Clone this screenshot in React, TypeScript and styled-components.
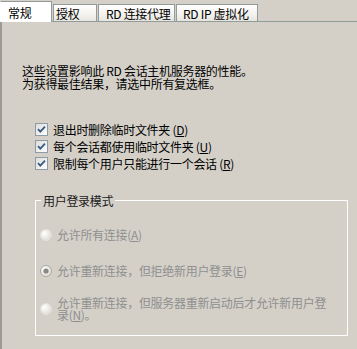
import React from 'react';
import styled, {createGlobalStyle, css} from 'styled-components';

const GlobalStyle = createGlobalStyle`
	html, body {
		margin: 0;
		padding: 0;
		background: #d4d0c8;
	}

	body {
		font-family: 'Noto Sans CJK SC', 'DejaVu Sans', sans-serif;
		font-size: 12px;
		line-height: 13px;
		letter-spacing: -0.3px;
		color: #000;
	}
`;

const Window = styled.div`
	width: 357px;
	height: 349px;
	overflow: hidden;
	display: flex;
	flex-direction: column;
`;

const TabStrip = styled.div`
	display: flex;
	align-items: flex-end;
	height: 21px;
	border-bottom: 1px solid #919b9c;
	flex-shrink: 0;
`;

const Tab = styled.div<{
	readonly $active?: boolean;
	readonly $width: number;
	readonly $indent: number;
}>(props => css`
	box-sizing: border-box;
	width: ${props.$width}px;
	padding-left: ${props.$indent}px;
	white-space: nowrap;
	border: 1px solid #919b9c;
	border-bottom: none;
	display: flex;
	align-items: center;

	${props.$active ? css`
		height: 21px;
		margin-bottom: -1px;
		background: #fff;
		border-left-color: #fff;
		position: relative;
		z-index: 1;
	` : css`
		height: 17px;
		margin-left: 1px;
		background: linear-gradient(#ffffff, #f3f2ee 60%, #e6e4dd);
		padding-top: 1px;
	`}
`);

const Panel = styled.div`
	flex: 1;
	border-left: 2px solid #9c9a94;
	display: flex;
	flex-direction: column;
`;

const Intro = styled.p`
	margin: 42px 0 0 20px;
	line-height: 13px;
`;

const CheckList = styled.div`
	margin: 31px 0 0 33px;
	display: flex;
	flex-direction: column;
`;

const CheckRow = styled.label`
	display: flex;
	align-items: center;
	gap: 5px;
	height: 17px;
`;

const Group = styled.fieldset`
	box-sizing: border-box;
	width: 313px;
	margin: 22px 0 0 33px;
	padding: 22px 4px 14px 4px;
	border: 1px solid #fff;
	display: flex;
	flex-direction: column;
	min-width: 0;
`;

const GroupTitle = styled.legend`
	padding: 0 2px;
	margin-left: 1px;
	line-height: 13px;
	color: #1a1a1a;
`;

const RadioRow = styled.div<{readonly $gap: number}>(props => css`
	display: flex;
	align-items: center;
	gap: 5px;
	margin-top: ${props.$gap}px;
	color: #8f8f8f;
`);

const RadioText = styled.span`
	width: 274px;
	line-height: 12px;
	word-break: break-all;
`;

const Key = styled.u`
	text-underline-offset: 1px;
`;

const CheckBox = () => (
	<svg width='13' height='13' viewBox='0 0 13 13' style={{flexShrink: 0}}>
		<defs>
			<linearGradient id='cbFill' x1='0' y1='0' x2='1' y2='1'>
				<stop offset='0' stopColor='#dcdcd8'/>
				<stop offset='1' stopColor='#ffffff'/>
			</linearGradient>
		</defs>
		<rect x='0.5' y='0.5' width='12' height='12' fill='url(#cbFill)' stroke='#8d9aa8'/>
		<path d='M3 6.2 L5.3 8.6 L10 3.6' fill='none' stroke='#3a5a86' strokeWidth='1.8'/>
	</svg>
);

const Radio: React.FC<{readonly checked?: boolean}> = ({checked}) => (
	<svg width='12' height='12' viewBox='0 0 12 12' style={{flexShrink: 0}}>
		<defs>
			<radialGradient id='rdFill' cx='0.35' cy='0.35' r='0.7'>
				<stop offset='0' stopColor='#ffffff'/>
				<stop offset='1' stopColor='#dedcd6'/>
			</radialGradient>
		</defs>
		<circle cx='6' cy='6' r='5.5' fill='url(#rdFill)' stroke={checked ? '#a9a7a2' : '#e2e0da'}/>
		{checked && <circle cx='6' cy='6' r='2.6' fill='#8a8884'/>}
	</svg>
);

const tabs = [
	{label: '常规', width: 52, indent: 7, active: true},
	{label: '授权', width: 44, indent: 2},
	{label: 'RD 连接代理', width: 77, indent: 7},
	{label: 'RD IP 虚拟化', width: 82, indent: 6},
];

const checks = [
	{text: '退出时删除临时文件夹', key: 'D'},
	{text: '每个会话都使用临时文件夹', key: 'U'},
	{text: '限制每个用户只能进行一个会话', key: 'R'},
];

export default function App() {
	return (
		<>
			<GlobalStyle/>
			<Window lang='zh-CN'>
				<TabStrip>
					{tabs.map(tab => (
						<Tab key={tab.label} $active={tab.active} $width={tab.width} $indent={tab.indent}>
							{tab.label}
						</Tab>
					))}
				</TabStrip>
				<Panel>
					<Intro>
						这些设置影响此 RD 会话主机服务器的性能。
						<br/>
						为获得最佳结果，请选中所有复选框。
					</Intro>
					<CheckList>
						{checks.map(item => (
							<CheckRow key={item.key}>
								<CheckBox/>
								<span>{item.text} (<Key>{item.key}</Key>)</span>
							</CheckRow>
						))}
					</CheckList>
					<Group>
						<GroupTitle>用户登录模式</GroupTitle>
						<RadioRow $gap={0}>
							<Radio/>
							<RadioText>允许所有连接(<Key>A</Key>)</RadioText>
						</RadioRow>
						<RadioRow $gap={24}>
							<Radio checked/>
							<RadioText>允许重新连接，但拒绝新用户登录(<Key>E</Key>)</RadioText>
						</RadioRow>
						<RadioRow $gap={20}>
							<Radio/>
							<RadioText>允许重新连接，但服务器重新启动后才允许新用户登录(<Key>N</Key>)。</RadioText>
						</RadioRow>
					</Group>
				</Panel>
			</Window>
		</>
	);
}
